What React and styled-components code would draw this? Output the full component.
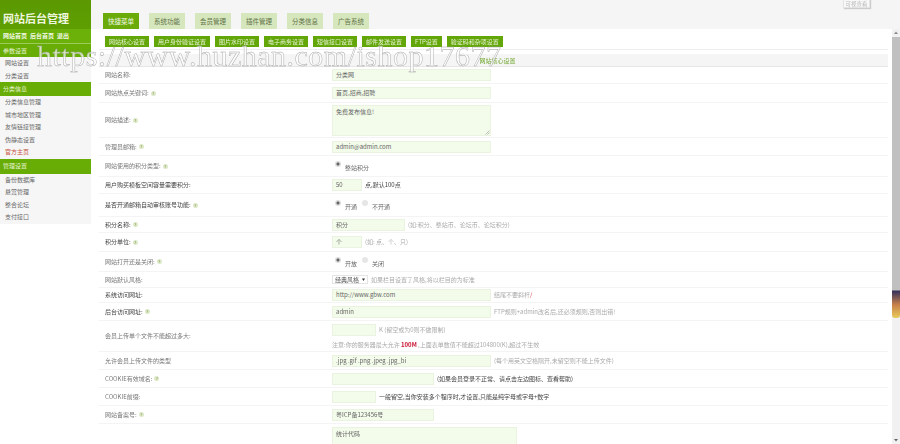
import styled, { createGlobalStyle } from "styled-components";

const GlobalStyle = createGlobalStyle`
  html, body {
    margin: 0;
    padding: 0;
    background: #fff;
    overflow: hidden;
  }
  * { box-sizing: border-box; }
`;

const Page = styled.div`
  position: relative;
  display: flex;
  width: 900px;
  height: 444px;
  overflow: hidden;
  font-family: "Noto Sans CJK SC", "Liberation Sans", sans-serif;
  font-size: 6px;
  line-height: 1;
  color: #666;
`;

const Blurred = styled.div`
  display: flex;
  width: 100%;
  height: 100%;
  filter: blur(0.45px);
`;

/* sidebar */
const Sidebar = styled.aside`
  flex: 0 0 91px;
  display: flex;
  flex-direction: column;
  align-self: flex-start;
  background: #f6f6f6;
`;

const Logo = styled.div`
  height: 29px;
  padding: 13px 0 0 3px;
  background: linear-gradient(#5b9802, #5f9f02);
  color: #eef6df;
  font-size: 11px;
  font-weight: 700;
  line-height: 11px;
`;

const TopLinks = styled.div`
  display: flex;
  align-items: center;
  gap: 3px;
  height: 15px;
  padding-left: 3px;
  background: #6cb109;
  border-bottom: 1px solid #9ccb5c;
  color: #f1f8e4;
  font-weight: 700;
`;

const SideHead = styled.div`
  display: flex;
  align-items: center;
  height: ${(p) => p.$h}px;
  padding-left: 3px;
  background: #68ad06;
  color: #e9f4d6;
`;

const SideItem = styled.div`
  display: flex;
  align-items: center;
  height: 12.5px;
  padding-left: 5px;
  color: ${(p) => (p.$red ? "#c9503f" : "#666")};
`;

/* main column */
const Main = styled.main`
  flex: 1;
  display: flex;
  flex-direction: column;
  min-width: 0;
`;

const TabBar = styled.div`
  flex: 0 0 29px;
  display: flex;
  align-items: flex-end;
  gap: 10px;
  padding-left: 12px;
  background: #f5f5f5;
`;

const Tab = styled.div`
  display: flex;
  align-items: center;
  justify-content: center;
  width: 36px;
  height: 16px;
  font-size: 6.5px;
  background: ${(p) => (p.$active ? "#6aab0a" : "#d6e6bd")};
  color: ${(p) => (p.$active ? "#f2f8e6" : "#5f7248")};
`;

const PreviewButton = styled.div`
  position: absolute;
  top: -4px;
  left: 843px;
  width: 27px;
  height: 12px;
  padding-top: 5px;
  background: #f8f8f8;
  border: 1px solid #e4e4e4;
  box-shadow: 1px 1px 1px #ccc;
  color: #bbb;
  font-size: 5.5px;
  text-align: center;
`;

const Body = styled.div`
  flex: 1;
  display: flex;
  min-height: 0;
`;

const Content = styled.div`
  flex: 1;
  min-width: 0;
  padding: 7px 4px 0 8px;
  overflow: hidden;
`;

const SubNav = styled.div`
  display: flex;
  gap: 5px;
  height: 13.5px;
  padding: 0 0 2.5px 6px;
  border-bottom: 1px solid #eee;
`;

const SubButton = styled.div`
  display: flex;
  align-items: center;
  height: 11px;
  padding: 0 4px;
  background: #62a608;
  color: #e8f3d5;
  white-space: nowrap;
`;

const Band = styled.div`
  height: 13px;
  margin-top: 4.5px;
  padding: 4px 0 0 8px;
  background: #f5f5f5;
  border-bottom: 1px solid #e6e6e6;
  color: #6fa52c;
  text-align: center;
`;

const Row = styled.div`
  display: grid;
  grid-template-columns: 233px 1fr;
  align-items: center;
  height: ${(p) => p.$h}px;
  border-bottom: 1px solid #f4f4f4;
`;

const Label = styled.div`
  display: flex;
  align-items: center;
  gap: 2px;
  padding-left: 6px;
  color: ${(p) => (p.$dark ? "#444" : "#777")};
`;

const Help = styled.span`
  display: inline-block;
  width: 5px;
  height: 5px;
  border-radius: 50%;
  background: #dde8c8;
  color: #6f8a3c;
  font-size: 4px;
  line-height: 5px;
  text-align: center;
`;

const Field = styled.div`
  display: flex;
  flex-direction: ${(p) => (p.$stack ? "column" : "row")};
  align-items: ${(p) => (p.$stack ? "flex-start" : "center")};
  gap: ${(p) => (p.$stack ? "6px" : "3px")};
`;

const Input = styled.div`
  flex: none;
  width: ${(p) => p.$w}px;
  height: ${(p) => p.$h || 12}px;
  padding: ${(p) => (p.$h ? "3px" : "0 3px")};
  display: ${(p) => (p.$h ? "block" : "flex")};
  align-items: center;
  background: #f3fbea;
  border: 1px solid #eaf3df;
  color: #666;
  white-space: nowrap;
  position: relative;
`;

const Resize = styled.svg`
  position: absolute;
  right: 0;
  bottom: 0;
  width: 5px;
  height: 5px;
`;

const Hint = styled.span`
  color: ${(p) => (p.$dark ? "#444" : "#aaa")};
  white-space: nowrap;
`;

const Slash = styled.span`
  color: #d33;
`;

const Strong = styled.b`
  color: #c8102e;
`;

const RadioGroup = styled.div`
  display: flex;
  align-items: flex-start;
  gap: 5px;
  padding-left: 3px;
`;

const RadioItem = styled.div`
  display: flex;
  align-items: flex-start;
  gap: 4px;
`;

const Radio = styled.span`
  display: block;
  width: 6px;
  height: 6px;
  border-radius: 50%;
  background: ${(p) => (p.$on ? "radial-gradient(circle, #666 0 1px, #ddd 2px)" : "#e6e6e6")};
`;

const RadioText = styled.span`
  margin-top: 4px;
  color: #666;
`;

const Select = styled.div`
  flex: none;
  display: flex;
  justify-content: space-between;
  align-items: center;
  width: 36px;
  height: 9px;
  padding: 0 2px;
  background: #fff;
  border: 1px solid #e4e4e4;
  color: #555;
`;

const Caret = styled.svg`
  width: 3px;
  height: 3px;
`;

/* scrollbar */
const Scrollbar = styled.div`
  flex: 0 0 8px;
  display: flex;
  flex-direction: column;
  background: #f1f1f1;
`;

const ScrollArrow = styled.svg`
  flex: 0 0 8px;
  width: 8px;
  height: 8px;
`;

const ScrollThumb = styled.div`
  flex: 0 0 281px;
  background: linear-gradient(#c0c0c0 0 253px, #35305a 254px, #c9824a 268px, #e8cc5c 281px);
  border-radius: 0 0 3px 3px;
`;

const ScrollTrack = styled.div`
  flex: 1;
`;

const Watermark = styled.div`
  position: absolute;
  top: 39px;
  left: 37px;
  font-family: "Liberation Serif", serif;
  font-size: 30px;
  line-height: 34px;
  letter-spacing: 0.5px;
  white-space: nowrap;
  color: rgba(255, 255, 255, 0.7);
  -webkit-text-stroke: 0.4px #a2a2a2;
  pointer-events: none;
`;

const tabs = ["快捷菜单", "系统功能", "会员管理", "插件管理", "分类信息", "广告系统"];
const subNav = ["网站核心设置", "用户身份验证设置", "图片水印设置", "电子商务设置", "短信接口设置", "邮件发送设置", "FTP设置", "验证码和杂项设置"];

const FormRow = ({ h, label, help, dark, children }) => (
  <Row $h={h}>
    <Label $dark={dark}>
      {label}
      {help && <Help>?</Help>}
    </Label>
    <Field>{children}</Field>
  </Row>
);

const Radios = ({ options }) => (
  <RadioGroup>
    {options.map((o, i) => (
      <RadioItem key={o}>
        <Radio $on={i === 0} />
        <RadioText>{o}</RadioText>
      </RadioItem>
    ))}
  </RadioGroup>
);

export default function App() {
  return (
    <Page>
      <GlobalStyle />
      <Blurred>
        <Sidebar>
          <Logo>网站后台管理</Logo>
          <TopLinks>
            <span>网站首页</span>
            <span>后台首页</span>
            <span>退出</span>
          </TopLinks>
          <SideHead $h={13}>参数设置</SideHead>
          <SideItem>网站设置</SideItem>
          <SideItem>分类设置</SideItem>
          <SideHead $h={14}>分类信息</SideHead>
          <SideItem>分类信息管理</SideItem>
          <SideItem>城市地区管理</SideItem>
          <SideItem>友情链接管理</SideItem>
          <SideItem>伪静态设置</SideItem>
          <SideItem $red>官方主页</SideItem>
          <SideHead $h={15}>管理设置</SideHead>
          <SideItem>备份数据库</SideItem>
          <SideItem>悬赏管理</SideItem>
          <SideItem>整合论坛</SideItem>
          <SideItem>支付接口</SideItem>
        </Sidebar>
        <Main>
          <TabBar>
            {tabs.map((t, i) => (
              <Tab key={t} $active={i === 0}>{t}</Tab>
            ))}
          </TabBar>
          <Body>
            <Content>
              <SubNav>
                {subNav.map((s) => (
                  <SubButton key={s}>{s}</SubButton>
                ))}
              </SubNav>
              <Band>网站核心设置</Band>
              <FormRow h={17} label="网站名称:">
                <Input $w={159}>分类网</Input>
              </FormRow>
              <FormRow h={19} label="网站热点关键词:" help>
                <Input $w={159}>首页,招商,招聘</Input>
              </FormRow>
              <FormRow h={35} label="网站描述:" help>
                <Input $w={159} $h={31}>
                  免费发布信息!
                  <Resize viewBox="0 0 5 5">
                    <path d="M0.5 4.5 L4.5 0.5 M2.5 4.5 L4.5 2.5" stroke="#999" strokeWidth="0.6" />
                  </Resize>
                </Input>
              </FormRow>
              <FormRow h={18} label="管理员邮箱:" help>
                <Input $w={159}>admin@admin.com</Input>
              </FormRow>
              <FormRow h={21} label="网站使用的积分类型:" help>
                <Radios options={["整站积分"]} />
              </FormRow>
              <FormRow h={17} label="用户购买模板空间容量需要积分:" dark>
                <Input $w={30}>50</Input>
                <Hint $dark>点,默认100点</Hint>
              </FormRow>
              <FormRow h={23} label="是否开通邮箱自动审核账号功能:" help dark>
                <Radios options={["开通", "不开通"]} />
              </FormRow>
              <FormRow h={16} label="积分名称:" help dark>
                <Input $w={73}>积分</Input>
                <Hint>(如:积分、整站币、论坛币、论坛积分)</Hint>
              </FormRow>
              <FormRow h={19} label="积分单位:" help dark>
                <Input $w={30}>个</Input>
                <Hint>(如: 点、个、只)</Hint>
              </FormRow>
              <FormRow h={20} label="网站打开还是关闭:" help>
                <Radios options={["开放", "关闭"]} />
              </FormRow>
              <FormRow h={16} label="网站默认风格:">
                <Select>
                  经典风格
                  <Caret viewBox="0 0 3 3">
                    <path d="M0 0.5 H3 L1.5 3 Z" fill="#333" />
                  </Caret>
                </Select>
                <Hint>如果栏目设置了风格,将以栏目的为标准</Hint>
              </FormRow>
              <FormRow h={15} label="系统访问网址:" dark>
                <Input $w={159}>http://www.gbw.com</Input>
                <Hint>结尾不要斜杆<Slash>/</Slash></Hint>
              </FormRow>
              <FormRow h={18} label="后台访问网址:" help dark>
                <Input $w={159}>admin</Input>
                <Hint>FTP规则+admin改名后,还必须规则,否则出错!</Hint>
              </FormRow>
              <Row $h={31}>
                <Label>会员上传单个文件不能超过多大:</Label>
                <Field $stack>
                  <Field>
                    <Input $w={44} />
                    <Hint>K (留空或为0则不做限制)</Hint>
                  </Field>
                  <Hint>注意:你的服务器最大允许 <Strong>100M</Strong> ,上面表单数值不能超过104800(K),超过不生效</Hint>
                </Field>
              </Row>
              <FormRow h={18} label="允许会员上传文件的类型">
                <Input $w={159}>.jpg .gif .png .jpeg .jpg_bi</Input>
                <Hint>(每个用英文空格隔开,未留空则不能上传文件)</Hint>
              </FormRow>
              <FormRow h={18} label="COOKIE有效域名:" help>
                <Input $w={102} />
                <Hint $dark>(如果会员登录不正常、请点击左边图标、查看帮助)</Hint>
              </FormRow>
              <FormRow h={18} label="COOKIE前缀:">
                <Input $w={44} />
                <Hint $dark>一般留空,当你安装多个程序时,才设置,只能是纯字母或字母+数字</Hint>
              </FormRow>
              <FormRow h={18} label="网站备案号:" help>
                <Input $w={102}>粤ICP备123456号</Input>
              </FormRow>
              <FormRow h={48} label="统计代码:" dark>
                <Input $w={185} $h={42}>统计代码</Input>
              </FormRow>
            </Content>
            <Scrollbar>
              <ScrollArrow viewBox="0 0 8 8">
                <path d="M4 2.5 L6 5 H2 Z" fill="#888" />
              </ScrollArrow>
              <ScrollThumb />
              <ScrollTrack />
              <ScrollArrow viewBox="0 0 8 8">
                <path d="M4 5.5 L6 3 H2 Z" fill="#666" />
              </ScrollArrow>
            </Scrollbar>
          </Body>
        </Main>
        <PreviewButton>可视查看</PreviewButton>
      </Blurred>
      <Watermark>https://www.huzhan.com/ishop17677</Watermark>
    </Page>
  );
}
